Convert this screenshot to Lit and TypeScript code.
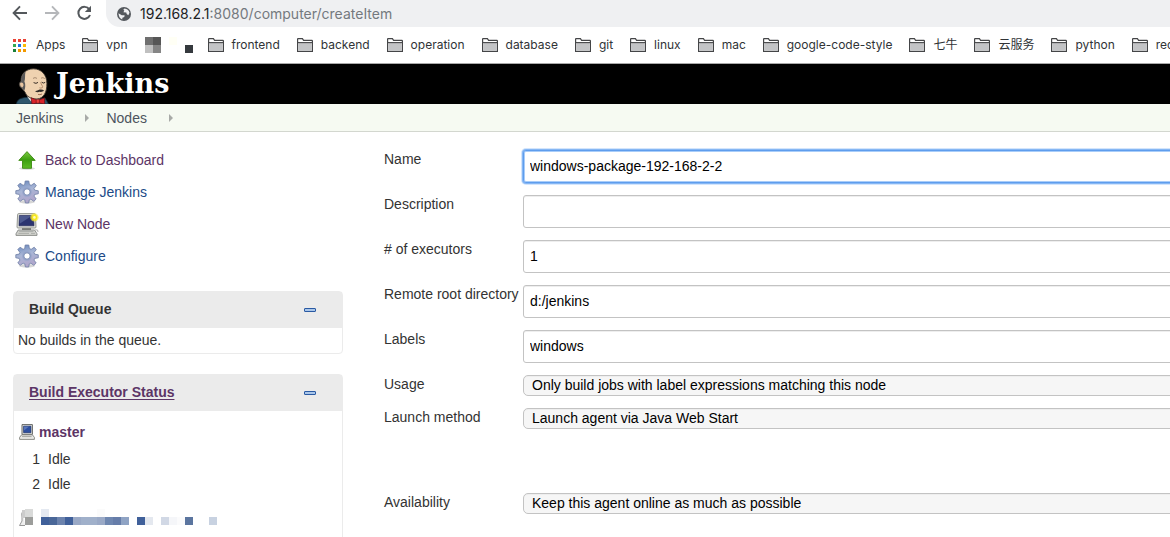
import { LitElement, html, css, svg } from "lit";
import { customElement } from "lit/decorators.js";

const folder = html`<svg class="folder" viewBox="0 0 16 14" width="16" height="14" aria-hidden="true">
  <path d="M.6 13.4V1.1Q.6.6 1.1.6H5.4L6.6 2.4H14.9Q15.4 2.4 15.4 2.9V13.4Z" fill="#fff" stroke="#444547" stroke-width="1.2"/>
  <path d="M1.2 5H14.8V12.8H1.2Z" fill="#c3c4c6"/><path d="M1 4.6H15" stroke="#444547" stroke-width="1.1"/>
</svg>`;

const gear = html`<svg viewBox="0 0 24 24" width="24" height="24" aria-hidden="true">
  <defs><linearGradient id="g" x1="0" y1="0" x2="0.3" y2="1"><stop offset="0" stop-color="#6384ba"/><stop offset=".5" stop-color="#a9b6d6"/><stop offset="1" stop-color="#b0a6cb"/></linearGradient></defs>
  <ellipse cx="12" cy="21.8" rx="8" ry="1.8" fill="#000" opacity=".16"/>
  <path d="M10.2 1H13.8L14.4 4.6L16.2 5.3L19.2 3.2L21.3 5.6L19 8.5L19.7 10.2L23.3 10.8V13.8L19.7 14.4L19 16.1L21.2 19L18.8 21.3L15.9 19.2L14.3 19.8L13.7 23H10.4L9.8 19.8L8.1 19.2L5.2 21.3L2.8 19L4.9 16.1L4.2 14.4L.8 13.8V10.7L4.2 10.1L4.9 8.4L2.8 5.5L5.1 3.2L8.1 5.3L9.7 4.6Z" fill="url(#g)" stroke="#6f7fa6" stroke-width=".8" stroke-linejoin="round"/>
  <circle cx="12" cy="12" r="4.8" fill="#8d9fc8" opacity=".6"/>
  <circle cx="12" cy="12" r="3.2" fill="#fff" stroke="#7083ae" stroke-width=".9"/>
</svg>`;

const upArrow = html`<svg viewBox="0 0 24 24" width="24" height="24" aria-hidden="true">
  <defs><linearGradient id="a" x1="0" y1="0" x2="0" y2="1"><stop offset="0" stop-color="#7cc93f"/><stop offset=".5" stop-color="#3d9f10"/><stop offset="1" stop-color="#5cbb25"/></linearGradient></defs>
  <ellipse cx="12" cy="20.6" rx="8" ry="1.4" fill="#000" opacity=".14"/>
  <path d="M12 3.6L20.2 12.4H16.5V20.3H7.5V12.4H3.8Z" fill="url(#a)" stroke="#3c8a12" stroke-width=".9" stroke-linejoin="round"/>
</svg>`;

const monitor = svg`
  <path d="M2.6 2.5Q2.7 1.6 3.6 1.6H19.4Q20.3 1.6 20.4 2.5L21 15Q21 16 20 16H3Q2 16 2 15Z" fill="#dddfda" stroke="#8c8e89" stroke-width=".9"/>
  <path d="M4.4 3.5H18.6L19 13.8H4Z" fill="#2b3470" stroke="#1e2450" stroke-width=".6"/>
  <path d="M4.5 3.8H17L5 11.6Z" fill="#7080ad" opacity=".5"/>
  <path d="M7 16.2H16V18H7Z" fill="#6f716d"/>
  <path d="M3.2 18H19.6L22 21.8V23.4H1V21.8Z" fill="#d2d3cf" stroke="#858783" stroke-width=".9" stroke-linejoin="round"/>
  <path d="M4.2 19.6H18.4M3.4 21.4H14M16 21.4H20" stroke="#a2a4a0" stroke-width=".8"/>`;

const newNode = html`<svg viewBox="0 0 24 24" width="24" height="24" aria-hidden="true">
  ${monitor}
  <path d="M20.4 17.6Q23.6 17.6 23 20" fill="none" stroke="#999" stroke-width=".8"/>
  <circle cx="19.4" cy="5.4" r="4.2" fill="#fcee35" opacity=".65"/><circle cx="19.4" cy="5.4" r="2.8" fill="#f7e71c"/><circle cx="19.4" cy="5.4" r="1.3" fill="#fffcc0"/>
</svg>`;

const computer = html`<svg viewBox="0 0 16 16" width="16" height="16" aria-hidden="true">
  <path d="M3 .6H13.4V10.4H3Z" fill="#e6e6e2" stroke="#555753" stroke-width=".9"/>
  <path d="M4.6 2.2H11.9V8.7H4.6Z" fill="#2d4fa0" stroke="#1a2f69" stroke-width=".7"/>
  <path d="M4.9 2.5H10L5 6.4Z" fill="#7791cd" opacity=".6"/>
  <path d="M2.6 10.8H13.4L15.4 13.4V15.4H.6V13.4Z" fill="#e9e9e6" stroke="#73756f" stroke-width=".8"/>
  <path d="M3 12.6H12.6" stroke="#a6a7a2"/>
</svg>`;

const collapse = html`<svg viewBox="0 0 12 4" width="12" height="4" aria-hidden="true">
  <rect x=".5" y=".5" width="11" height="3" rx=".4" fill="#a9c6ea" stroke="#2a5aa3"/></svg>`;

const butler = html`<svg class="butler" viewBox="0 0 34 36" width="34" height="36" aria-hidden="true">
  <path d="M.5 36C1 31.5 4.5 30 10 29.4L22 31.5L29 30L32.5 36Z" fill="#2f566c" stroke="#16303f" stroke-width=".7"/>
  <path d="M11 28.5L15 33.5H22L24 30.5Z" fill="#f3f3ef"/>
  <path d="M5.6 20C2.8 18.6 2.6 14.4 5 13.6C4.6 6.4 9.4.9 17.4.8C25.8.8 30.9 7.2 30.9 15.4C31 24.4 27.6 30.4 21 31C14.4 30.8 10.6 28.6 9.2 24.4Z" fill="#efd2b0" stroke="#3a332c" stroke-width=".9"/>
  <path d="M5 13.6C4.8 9.5 6.2 6 9.6 3.4C8.6 7.6 9.6 10 8.4 13.6C9.8 16 9.4 20.4 8.2 23L6.2 20.2C2.9 18.5 3 14.8 5 13.6Z" fill="#5d5b5a"/>
  <path d="M4.2 15C5.6 13.6 7.8 15 7.5 17.6L6.5 19.6C4.6 18.8 3.6 16.8 4.2 15Z" fill="#e9c5a0"/>
  <path d="M17 10.4Q19 8.8 21 10.4M25 10.2Q27 8.9 28.8 10.6" fill="none" stroke="#8b6f57" stroke-width=".7"/>
  <path d="M17.6 14.6Q20.2 16.2 22 14.4M25.6 14.2Q27.4 15.8 29.2 14.4" fill="none" stroke="#3b3028" stroke-width="1"/>
  <path d="M24.6 14.3C25 16.6 27.4 18.4 26.4 19.6Q25 20.6 23.4 19.8" fill="none" stroke="#a87c5c" stroke-width=".8"/>
  <path d="M19 23.2Q21.5 22.6 23.6 21.6Q26.4 21 28.2 22.8Q26 24.4 23.6 23.8Q21.4 24.9 19 23.2Z" fill="#2e2a28"/>
  <path d="M22 26.4Q24 27.2 26 26" fill="none" stroke="#8c5844" stroke-width=".8"/>
  <path d="M15 29.8L21.6 32.2L28.6 30V36L22 34.8L16 36Z" fill="#d8232a" stroke="#6d1216" stroke-width=".8"/>
  <rect x="20.2" y="31.4" width="3.2" height="3.8" rx="1" fill="#ee3e3a" stroke="#6d1216" stroke-width=".6"/>
</svg>`;

const appsColors = ["#ea4335", "#ea4335", "#ea4335", "#34a853", "#1a73e8", "#fbbc04", "#188038", "#f29900", "#f29900"];

const blockRow = ["#40609a", "#4a6798", "#6c83ad", "#40609a", "#9aa9c6", "#a0b0ca", "#a0b0ca", "#9aa9c6", "#6f87b0", "#667da9", "#8fa3c4", "", "#40609a", "#e4e8ef", "", "#d1d8e5", "#f5f6f9", "#fbfbfc", "#5b759f", "", "", "#c8d2e1"];

@customElement("browser-chrome")
class BrowserChrome extends LitElement {
  static styles = css`
    :host { display: block; background: #fff; border-bottom: 1px solid #a9a9a9; font-family: Inter, "Noto Sans CJK SC", sans-serif; overflow: hidden; }
    .toolbar { display: flex; height: 27px; }
    nav { display: flex; gap: 16px; padding: 4px 14px 0 12px; }
    button { border: 0; padding: 0; background: none; width: 16px; height: 18px; display: block; }
    nav svg { display: block; }
    .address { flex: 1; display: flex; align-items: center; gap: 9px; background: #eff0f2; border-bottom-left-radius: 14px; padding-left: 11px; font-size: 14px; line-height: 20px; }
    .host { color: #202124; }
    .bookmarks { display: flex; align-items: center; height: 36px; padding-left: 12px; gap: 17px; font-size: 12px; line-height: 16px; white-space: nowrap; }
    a { color: #303336; text-decoration: none; display: flex; align-items: center; gap: 8px; flex: none; }
    a.apps { gap: 10px; }
    a.url { display: block; color: #74797e; }
    .redacted { flex: none; display: block; overflow: visible; }
  `;
  bookmark = (name: string) => html`<a href="#">${folder}<span>${name}</span></a>`;
  render() {
    return html`
      <div class="toolbar">
        <nav>
          <button aria-label="Back"><svg viewBox="0 0 16 18" width="16" height="18"><path d="M15 9H2M8 2.4L1.6 9L8 15.6" fill="none" stroke="#54585c" stroke-width="1.9"/></svg></button>
          <button aria-label="Forward"><svg viewBox="0 0 16 18" width="16" height="18"><path d="M1 9H14M8 2.4L14.4 9L8 15.6" fill="none" stroke="#b5b7ba" stroke-width="1.9"/></svg></button>
          <button aria-label="Reload"><svg viewBox="0 0 16 18" width="16" height="18"><path d="M13.3 5.4A6 6 0 1 0 14 11" fill="none" stroke="#54585c" stroke-width="2"/><path d="M15 1.8V8H8.8Z" fill="#54585c"/></svg></button>
        </nav>
        <div class="address">
          <svg viewBox="0 0 14 14" width="14" height="14" aria-hidden="true"><circle cx="7" cy="7" r="7" fill="#54585d"/><path d="M1.5 6.3L4.8 8.2L7.6 8.2L7.3 10L5.4 10.7L5.2 12.6Q1.6 11 1.5 6.3ZM7.5 1.5Q11.5 1.9 12.5 5.7L11.3 8.2L9.7 7L9.3 5.4L6.4 5.2L7.3 3.6L6.3 2.8Z" fill="#eff0f2"/></svg>
          <a class="url" href="#"><span class="host">192.168.2.1</span>:8080/computer/createItem</a>
        </div>
      </div>
      <div class="bookmarks">
        <a class="apps" href="#"><svg viewBox="0 0 14 14" width="14" height="14" aria-hidden="true">${appsColors.map((c, i) => svg`<rect x=${(i % 3) * 5 + 1} y=${Math.floor(i / 3) * 5 + 1} width="3" height="3" fill=${c}/>`)}</svg><span>Apps</span></a>
        ${this.bookmark("vpn")}
        <svg class="redacted" viewBox="0 0 46 16" width="46" height="16" aria-hidden="true"><path d="M0 0h8v8H0z" fill="#6f6f6f"/><path d="M8 0h8v8H8z" fill="#565656"/><path d="M0 8h8v8H0z" fill="#c0c0c0"/><path d="M8 8h8v8H8z" fill="#858585"/><path d="M24 0h8v8h-8z" fill="#fffff5"/><path d="M40 8h8v8h-8z" fill="#35393e"/></svg>
        ${["frontend", "backend", "operation", "database", "git", "linux", "mac", "google-code-style", "七牛", "云服务", "python", "redis"].map(this.bookmark)}
      </div>`;
  }
}

@customElement("side-panel")
class SidePanel extends LitElement {
  static styles = css`
    :host { display: block; }
    a { color: #204a87; text-decoration: none; }
    a.visited { color: #5c3566; }
    .tasks { display: flex; flex-direction: column; gap: 8px; padding: 0 2px; margin-bottom: 23px; }
    .tasks a { display: flex; align-items: center; gap: 6px; height: 24px; }
    .tasks svg { display: block; }
    .pane { border: 1px solid #ebebeb; border-radius: 4px; margin-bottom: 20px; }
    .head { display: flex; align-items: center; justify-content: space-between; height: 36px; padding: 0 26px 0 15px; background: #ebebeb; }
    h2 { margin: 0; padding-bottom: 2px; font-size: 14px; line-height: 20px; }
    h2 a { text-decoration: underline; text-underline-offset: 2px; }
    button { border: 0; padding: 0; background: none; display: flex; }
    p { margin: 0; padding: 2px 4px 3px; line-height: 20px; }
    .executors { padding: 11px 5px 40px; line-height: 20px; }
    .node { display: flex; align-items: center; gap: 4px; font-weight: bold; margin-bottom: 5px; }
    ol { list-style: none; margin: 0; padding: 0; }
    li { display: flex; gap: 8px; line-height: 25px; }
    .num { width: 21px; text-align: right; }
    .redacted { display: block; margin-top: 12px; }
  `;
  render() {
    return html`
      <nav class="tasks">
        <a class="visited" href="#">${upArrow}<span>Back to Dashboard</span></a>
        <a href="#">${gear}<span>Manage Jenkins</span></a>
        <a class="visited" href="#">${newNode}<span>New Node</span></a>
        <a href="#">${gear}<span>Configure</span></a>
      </nav>
      <section class="pane">
        <div class="head"><h2>Build Queue</h2><button aria-label="Collapse build queue">${collapse}</button></div>
        <p>No builds in the queue.</p>
      </section>
      <section class="pane">
        <div class="head"><h2><a class="visited" href="#">Build Executor Status</a></h2><button aria-label="Collapse executor status">${collapse}</button></div>
        <div class="executors">
          <div class="node">${computer}<a class="visited" href="#">master</a></div>
          <ol>
            <li><span class="num">1</span><span>Idle</span></li>
            <li><span class="num">2</span><span>Idle</span></li>
          </ol>
          <svg class="redacted" viewBox="0 0 200 18" width="200" height="18" aria-hidden="true">
            <path d="M4 2Q2 4 3 8V12L.5 16.5H6" fill="#eee" stroke="#999"/><path d="M3 1h3v8H3z" fill="#ccc"/><path d="M6 0h8v8H6z" fill="#d9dad9"/><path d="M6 8h8v8H6z" fill="#9c9d9b"/>
            <path d="M22 0h8v8h-8z" fill="#e4e9f1"/><path d="M78 0h8v8h-8z" fill="#fbfbfb"/>
            ${blockRow.map((c, i) => (c ? svg`<rect x=${22 + i * 8} y="8" width="8" height="8" fill=${c}/>` : null))}
          </svg>
        </div>
      </section>`;
  }
}

@customElement("node-form")
class NodeForm extends LitElement {
  static styles = css`
    :host { display: block; overflow: hidden; }
    form { display: grid; grid-template-columns: 139px 1fr; row-gap: 12px; padding: 2px 0; margin-right: -20px; }
    label { line-height: 18px; white-space: nowrap; height: 20px; }
    input, select { box-sizing: border-box; width: 100%; margin: 0; border: 1px solid #c3c3c3; color: #000; font: 14px "Liberation Sans", Arial, sans-serif; outline: 0; box-shadow: inset 0 1px 0 #eee; }
    input { height: 33px; padding: 0 6px 2px; border-radius: 3px; background: #fff; }
    select { appearance: none; height: 21px; padding: 0 8px 2px; border-radius: 5px; background: #f6f6f6; }
    .active { border-color: #5e9ded; box-shadow: 0 0 0 1px #86b7f4, 0 0 0 2px #d3e5fc, inset 0 0 0 1px #a9cdf9; }
    .options { grid-column: 1 / -1; height: 40px; }
  `;
  text = (id: string, label: string, value: string, active = false) => html`
    <label for=${id}>${label}</label><input id=${id} class=${active ? "active" : ""} type="text" .value=${value}>`;
  choice = (id: string, label: string, value: string) => html`
    <label for=${id}>${label}</label><select id=${id}><option>${value}</option></select>`;
  render() {
    return html`<form>
      ${this.text("name", "Name", "windows-package-192-168-2-2", true)}
      ${this.text("description", "Description", "")}
      ${this.text("executors", "# of executors", "1")}
      ${this.text("root", "Remote root directory", "d:/jenkins")}
      ${this.text("labels", "Labels", "windows")}
      ${this.choice("usage", "Usage", "Only build jobs with label expressions matching this node")}
      ${this.choice("launch", "Launch method", "Launch agent via Java Web Start")}
      <div class="options"></div>
      ${this.choice("availability", "Availability", "Keep this agent online as much as possible")}
    </form>`;
  }
}

@customElement("app-root")
class AppRoot extends LitElement {
  static styles = css`
    :host { display: block; height: 100vh; overflow: hidden; background: #fff; color: #333; font: 14px/20px "Liberation Sans", Arial, sans-serif; }
    header { display: flex; height: 40px; background: #000; padding-left: 16px; }
    .brand { display: flex; gap: 6px; color: #fff; text-decoration: none; font: bold 27px/40px "DejaVu Serif", serif; }
    .butler { display: block; align-self: flex-end; }
    .crumbs { display: flex; align-items: center; gap: 20px; height: 27px; padding-left: 16px; background: #f6faf2; border-bottom: 1px solid #d3d7cf; }
    .crumbs a { color: #4d545d; text-decoration: none; }
    .crumbs svg { display: block; margin-left: 2px; margin-right: -3px; }
    .page { display: grid; grid-template-columns: 330px minmax(0, 1fr); gap: 36px; padding: 16px 0 0 13px; }
    node-form { padding-left: 5px; }
  `;
  render() {
    const arrow = html`<svg viewBox="0 0 4 8" width="4" height="8" aria-hidden="true"><path d="M0 0L4 4L0 8Z" fill="#a8aaa7"/></svg>`;
    return html`
      <browser-chrome></browser-chrome>
      <header><a class="brand" href="#">${butler}<span>Jenkins</span></a></header>
      <nav class="crumbs"><a href="#">Jenkins</a>${arrow}<a href="#">Nodes</a>${arrow}</nav>
      <div class="page"><side-panel></side-panel><node-form></node-form></div>`;
  }
}
